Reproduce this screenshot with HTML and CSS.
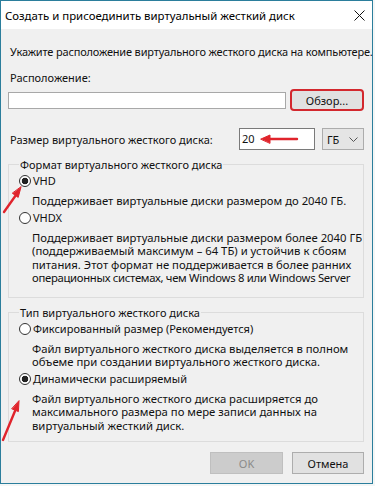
FILE: index.html
```html
<!DOCTYPE html>
<html lang="ru">
<head>
<meta charset="utf-8">
<link rel="stylesheet" href="styles.css">
</head>
<body>
<div class="window">
  <div class="titlebar">
    <span class="title">Создать и присоединить виртуальный жесткий диск</span>
    <svg class="close" width="11" height="11" viewBox="0 0 11 11"><path d="M0.5 0.5L10.5 10.5M10.5 0.5L0.5 10.5" stroke="#111" stroke-width="1" fill="none"/></svg>
  </div>
  <div class="content">
    <p class="intro">Укажите расположение виртуального жесткого диска на компьютере.</p>
    <p class="label">Расположение:</p>
    <div class="loc-row">
      <div class="textbox loc"></div>
      <div class="btn browse">Обзор...</div>
    </div>
    <div class="size-row">
      <span class="size-label">Размер виртуального жесткого диска:</span>
      <div class="textbox size">20</div>
      <div class="combo"><span>ГБ</span><svg width="9" height="5" viewBox="0 0 9 5"><path d="M0.5 0.5L4.5 4.5L8.5 0.5" stroke="#555" fill="none"/></svg></div>
    </div>
    <fieldset class="group g1">
      <legend>Формат виртуального жесткого диска</legend>
      <div class="radio checked"><span class="dot"></span>VHD</div>
      <p class="desc">Поддерживает виртуальные диски размером до 2040 ГБ.</p>
      <div class="radio"><span class="dot"></span>VHDX</div>
      <p class="desc">Поддерживает виртуальные диски размером более 2040 ГБ<br>(поддерживаемый максимум – 64 ТБ) и устойчив к сбоям<br>питания. Этот формат не поддерживается в более ранних<br><span class="tight">операционных системах, чем Windows 8 или Windows Server</span></p>
    </fieldset>
    <fieldset class="group g2">
      <legend>Тип виртуального жесткого диска</legend>
      <div class="radio"><span class="dot"></span>Фиксированный размер (Рекомендуется)</div>
      <p class="desc">Файл виртуального жесткого диска выделяется в полном<br>объеме при создании виртуального жесткого диска.</p>
      <div class="radio checked"><span class="dot"></span>Динамически расширяемый</div>
      <p class="desc">Файл виртуального жесткого диска расширяется до<br>максимального размера по мере записи данных на<br>виртуальный жесткий диск.</p>
    </fieldset>
    <div class="buttons">
      <div class="btn ok">OK</div>
      <div class="btn cancel">Отмена</div>
    </div>
  </div>
</div>
<svg class="annotations" width="375" height="486" viewBox="0 0 375 486">
  <g stroke="#e0242c" stroke-width="2.4" stroke-linecap="round" fill="#e0242c">
    <line x1="297" y1="139" x2="268" y2="139"/>
    <polygon points="261,139 270,135 270,143" stroke-width="1"/>
    <line x1="4" y1="212" x2="16" y2="195"/>
    <polygon points="21,187 18.2,197.4 12.6,193.4" stroke-width="1"/>
    <line x1="3" y1="440" x2="15" y2="411"/>
    <polygon points="19,401 18.4,411.6 12,408.9" stroke-width="1"/>
  </g>
</svg>
</body>
</html>
```

FILE: styles.css
```css
html, body {
  margin: 0;
  padding: 0;
}
body {
  position: relative;
  width: 375px;
  height: 486px;
  background: #f4f6f6;
  font-family: "Noto Sans", "Open Sans", sans-serif;
  font-size: 11px;
  color: #111;
  overflow: hidden;
}
p {
  margin: 0;
}
.window {
  width: 373px;
  height: 484px;
  box-sizing: border-box;
  border: 1px solid #2b7e9c;
  background: #f0f0f0;
  display: flex;
  flex-direction: column;
}
.titlebar {
  flex: none;
  height: 28px;
  background: #fff;
  display: flex;
  align-items: center;
  justify-content: space-between;
  padding: 0 7px 0 4px;
}
.title {
  font-size: 11.4px;
  color: #000;
}
.close {
  display: block;
}
.content {
  display: flex;
  flex-direction: column;
  padding: 0 8px 0 7px;
}
.intro {
  margin: 15px 0 0 2px;
  line-height: 15px;
  white-space: nowrap;
  letter-spacing: -0.17px;
}
.label {
  margin: 11px 0 0 2px;
  line-height: 15px;
}
.loc-row {
  margin-top: 4px;
  height: 22px;
  display: flex;
  align-items: center;
  gap: 4px;
}
.textbox {
  box-sizing: border-box;
  background: #fff;
  border: 1px solid #a8a8a8;
}
.textbox.loc {
  flex: 1;
  height: 17px;
}
.btn {
  box-sizing: border-box;
  display: flex;
  align-items: center;
  justify-content: center;
  background: #e1e1e1;
  border: 1px solid #adadad;
}
.browse {
  width: 74px;
  height: 22px;
  border: 2px solid #d3282e;
  border-radius: 4px;
}
.size-row {
  margin-top: 17px;
  height: 22px;
  display: flex;
  align-items: center;
}
.size-label {
  flex: 1;
  margin-left: 2px;
}
.textbox.size {
  width: 76px;
  height: 22px;
  border-color: #7a7a7a;
  padding-left: 2px;
  line-height: 20px;
}
.combo {
  box-sizing: border-box;
  width: 42px;
  height: 22px;
  margin-left: 7px;
  background: #e5e5e5;
  border: 1px solid #acacac;
  display: flex;
  align-items: center;
  justify-content: space-between;
  padding: 0 5px 0 4px;
}
.group {
  margin: 7px 0 0 0;
  padding: 0 0 12px 10px;
  border: 1px solid #dcdcdc;
  min-width: 0;
}
.group legend {
  padding: 0 1px;
  line-height: 15px;
}
.g2 {
  padding-bottom: 9px;
}
.radio {
  margin-top: 1px;
  height: 16px;
  line-height: 16px;
  display: flex;
  align-items: center;
}
.desc + .radio {
  margin-top: 2px;
}
.dot {
  box-sizing: border-box;
  width: 12px;
  height: 12px;
  border: 1px solid #333;
  border-radius: 50%;
  background: #fff;
  margin-right: 2px;
}
.checked .dot {
  background: radial-gradient(circle, #222 0, #222 3px, #fff 3.6px);
}
.desc {
  margin: 5px 0 0 13px;
  line-height: 13.5px;
  font-size: 11.3px;
  white-space: nowrap;
}
.tight {
  letter-spacing: -0.3px;
}
.buttons {
  margin-top: 10px;
  display: flex;
  justify-content: flex-end;
  gap: 9px;
}
.ok, .cancel {
  height: 22px;
}
.ok {
  width: 73px;
  background: #cccccc;
  border-color: #bfbfbf;
  color: #8a8a8a;
}
.cancel {
  width: 72px;
}
.annotations {
  position: absolute;
  left: 0;
  top: 0;
  pointer-events: none;
}
```
